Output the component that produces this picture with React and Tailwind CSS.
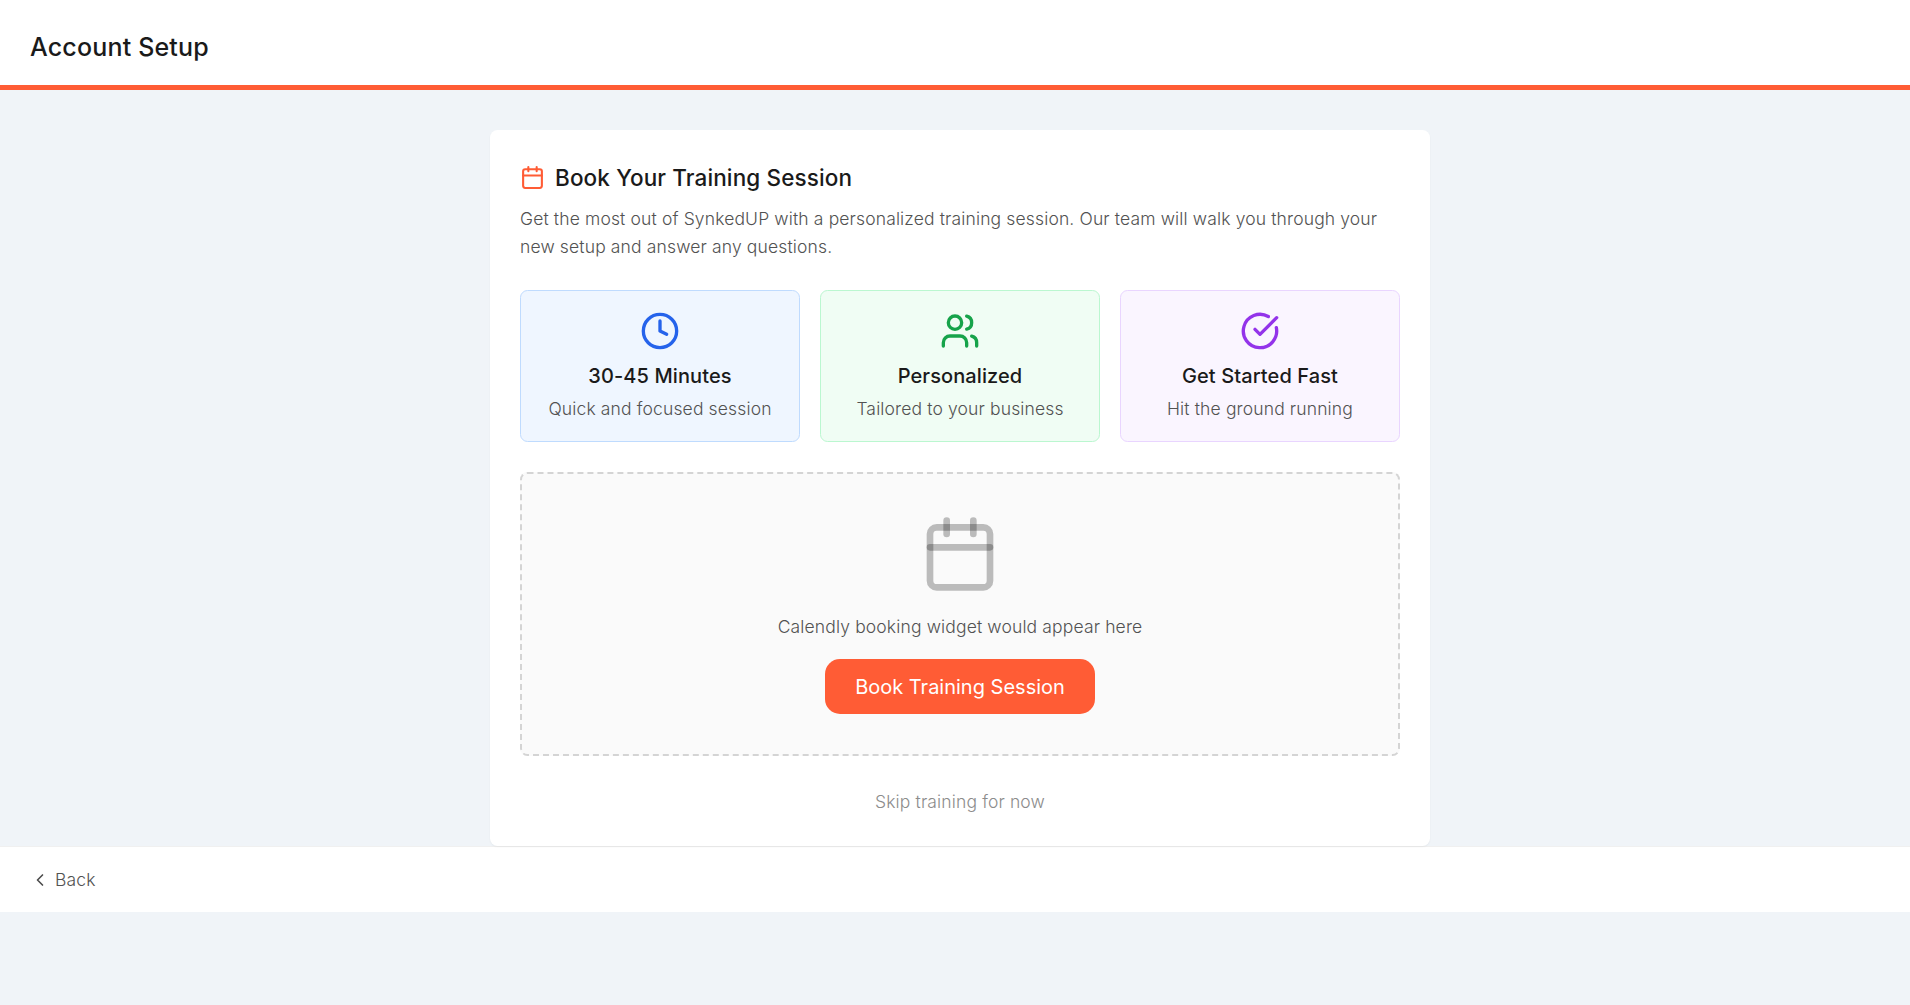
import React from "react";
import { Calendar, Clock, Users, CircleCheckBig, ChevronLeft } from "lucide-react";

const features = [
  { icon: Clock, title: "30-45 Minutes", text: "Quick and focused session", box: "border-[#bfdbfe] bg-[#eff6ff]", color: "text-[#2563eb]" },
  { icon: Users, title: "Personalized", text: "Tailored to your business", box: "border-[#bbf7d0] bg-[#f0fdf4]", color: "text-[#16a34a]" },
  { icon: CircleCheckBig, title: "Get Started Fast", text: "Hit the ground running", box: "border-[#e9d5ff] bg-[#faf5ff]", color: "text-[#9333ea]" },
];

export default function App() {
  return (
    <div className="min-h-screen bg-[#f0f4f8] font-['Inter',sans-serif] text-[17.5px] leading-[28px] font-light tracking-[0.14px] text-[#525252]">
      <header className="flex h-[90px] items-center border-b-[5px] border-[#ff5c35] bg-white px-[30px] pt-2.5">
        <h1 className="text-[25px] leading-[35px] font-medium tracking-[0.18px] text-[#1a1a1a]">Account Setup</h1>
      </header>

      <div className="flex justify-center pt-10 pl-2.5">
        <main className="h-[716px] w-[940px] rounded-[7.5px] bg-white p-[30px] shadow-[0_1px_2px_rgba(0,0,0,0.05)]">
          <div className="flex h-9 items-center gap-2.5">
            <Calendar size={25} className="mb-px text-[#ff5c35]" />
            <h2 className="text-[22.5px] leading-9 font-medium tracking-[0.12px] text-[#1a1a1a]">Book Your Training Session</h2>
          </div>
          <p className="mt-[9px]">
            Get the most out of SynkedUP with a personalized training session. Our team will walk you through your new setup and answer any questions.
          </p>

          <div className="mt-[29px] grid grid-cols-3 gap-5">
            {features.map(({ icon: Icon, title, text, box, color }) => (
              <div key={title} className={`flex h-[152px] flex-col items-center rounded-[7.5px] border pt-5 ${box}`}>
                <Icon size={40} className={color} />
                <h3 className="mt-2.5 text-[20px] leading-[30px] font-medium tracking-[0.1px] text-[#1a1a1a]">{title}</h3>
                <p className="mt-1">{text}</p>
              </div>
            ))}
          </div>

          <div className="mt-[30px] flex h-[284px] flex-col items-center rounded-[7.5px] border-2 border-dashed border-[#d4d4d4] bg-[#fafafa] pt-10">
            <Calendar size={80} className="text-black/25" />
            <p className="mt-[19px]">Calendly booking widget would appear here</p>
            <button className="mt-[18px] h-[55px] w-[270px] rounded-[15px] bg-[#ff5c35] text-[20px] font-normal tracking-normal text-white">
              Book Training Session
            </button>
          </div>

          <div className="mt-8 flex justify-center">
            <button className="text-[#8c8c8c]">Skip training for now</button>
          </div>
        </main>
      </div>

      <footer className="flex h-[66px] items-center border-t border-[#f0f0f0] bg-white px-[30px]">
        <button className="flex items-center gap-[5px]">
          <ChevronLeft size={20} className="text-[#4d4d4d]" />
          Back
        </button>
      </footer>
    </div>
  );
}
